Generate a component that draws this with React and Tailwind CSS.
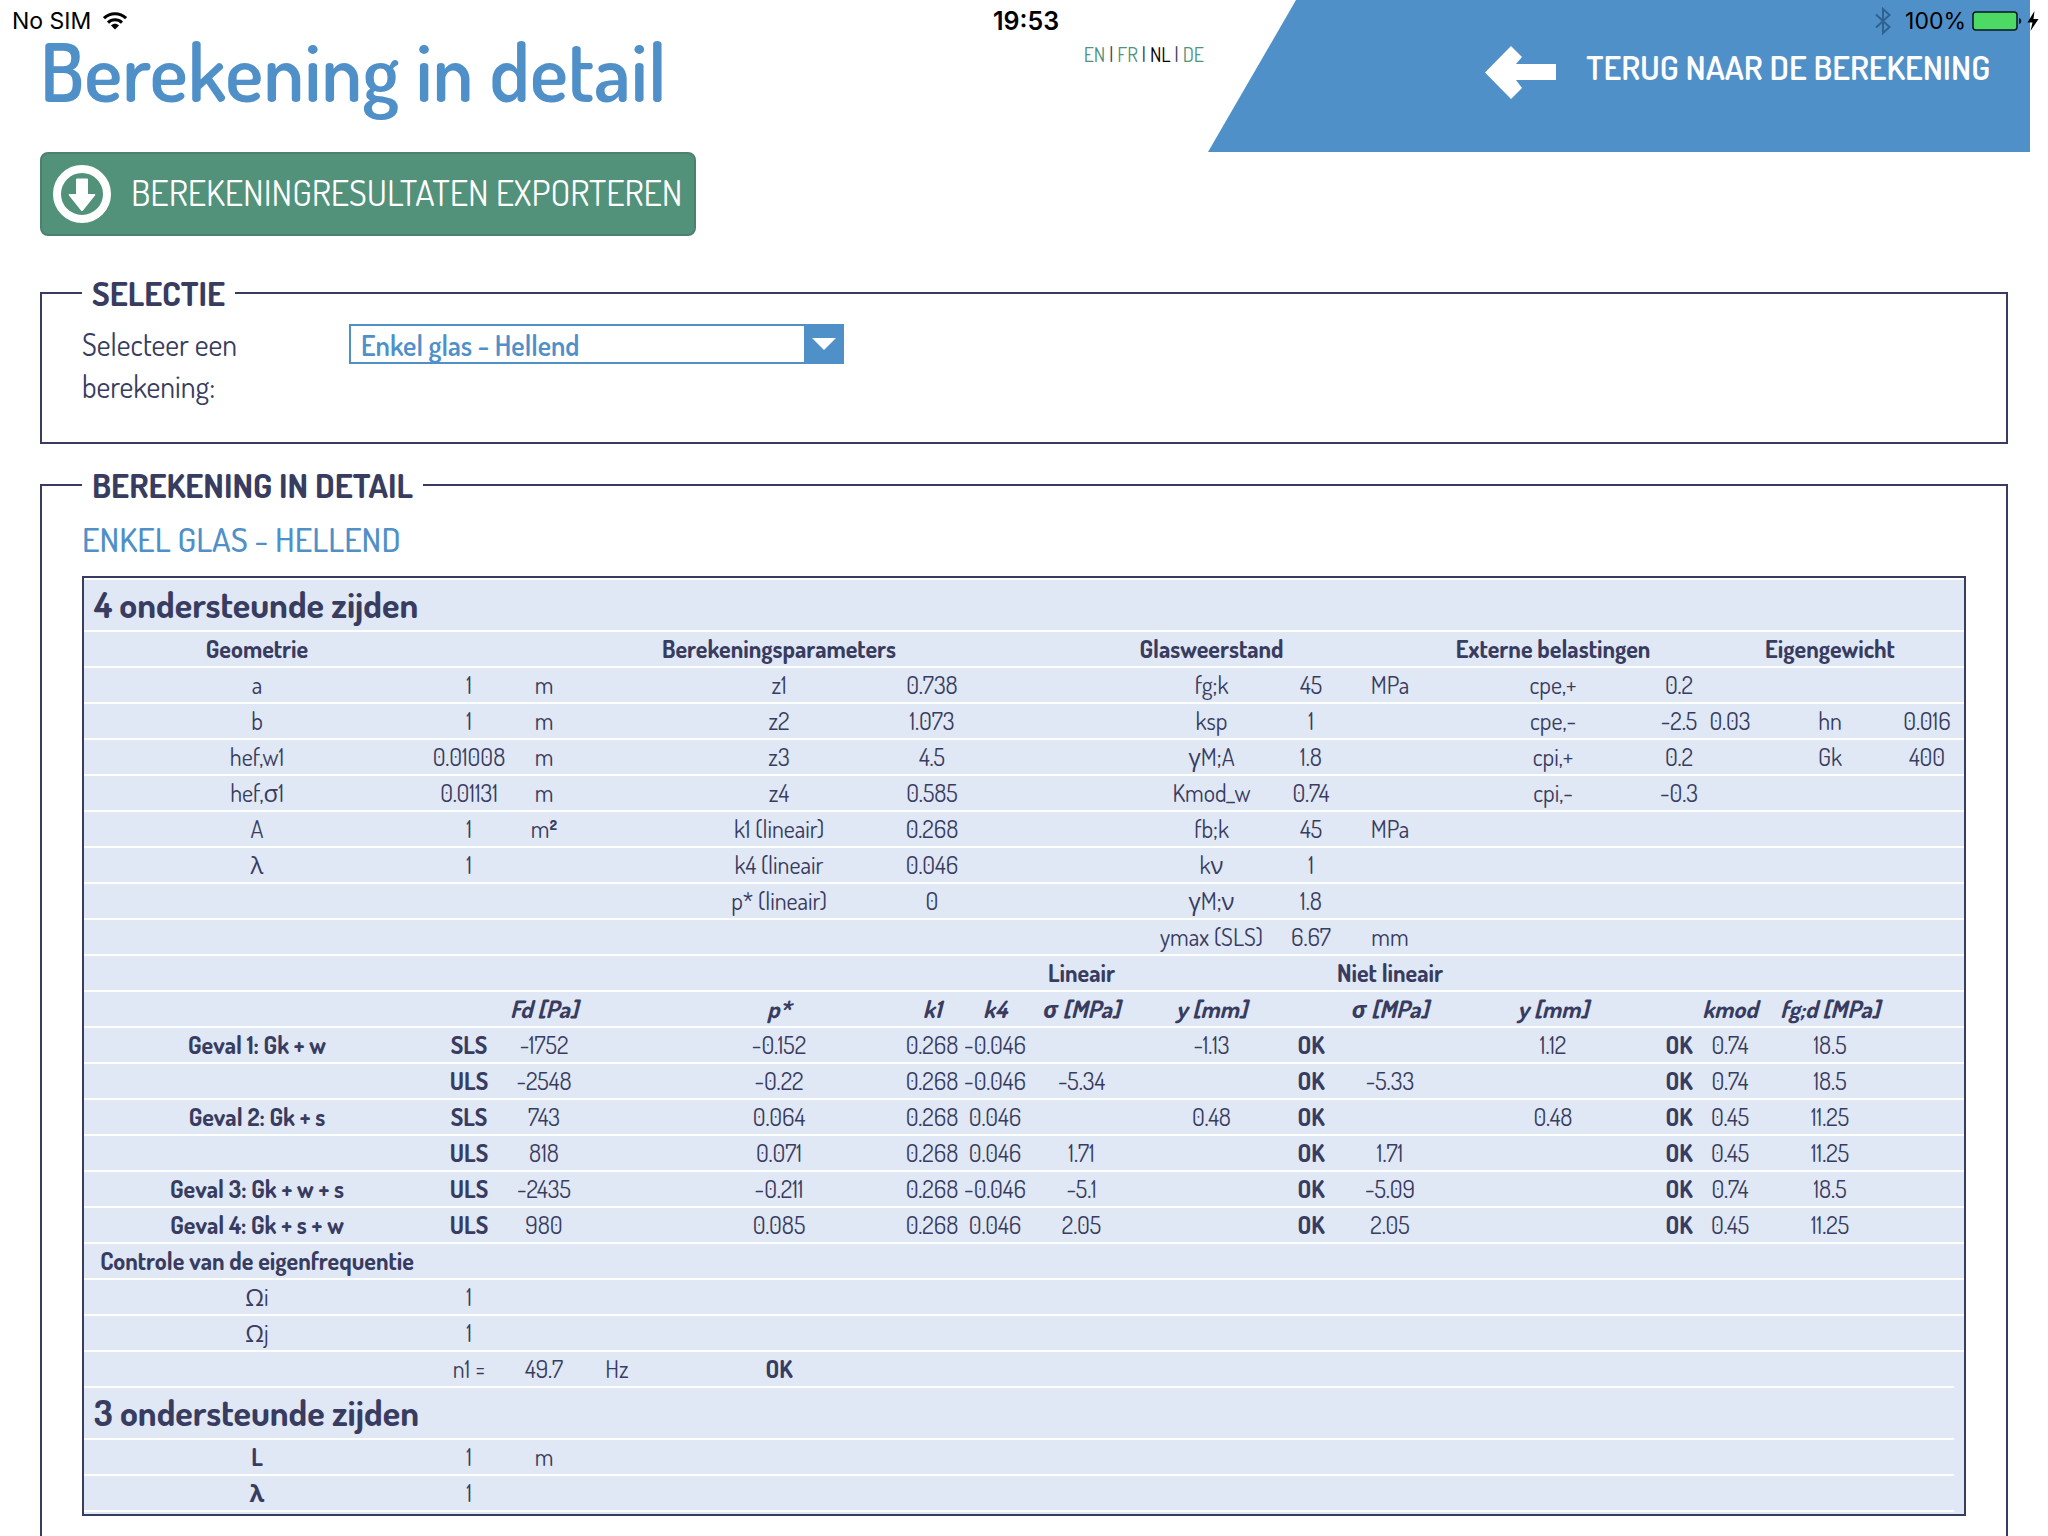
import React from 'react';

const LANGUAGES = ['EN', 'FR', 'NL', 'DE'];

const COLUMNS = [
    'w-[346px]', 'w-[78px]', 'w-[72px]', 'w-[74px]', 'w-[250px]', 'w-[56px]',
    'w-[70px]', 'w-[103px]', 'w-[157px]', 'w-[42px]', 'w-[116px]', 'w-[210px]',
    'w-[42px]', 'w-[60px]', 'w-[140px]', 'w-[54px]', 'w-[10px]',
];

const OK = <b>OK</b>;
const SLS = <b>SLS</b>;
const ULS = <b>ULS</b>;

// Cells are keyed by column index, columns left out stay empty.
// span is the number of columns when a row does not fill the table.
const ROWS = [
    { title: '4 ondersteunde zijden' },
    { head: true, cells: { 0: 'Geometrie', 4: 'Berekeningsparameters', 8: 'Glasweerstand', 11: 'Externe belastingen', 14: 'Eigengewicht' } },
    { cells: { 0: 'a', 1: '1', 2: 'm', 4: 'z1', 5: '0.738', 8: 'fg;k', 9: '45', 10: 'MPa', 11: 'cpe,+', 12: '0.2' } },
    { cells: { 0: 'b', 1: '1', 2: 'm', 4: 'z2', 5: '1.073', 8: 'ksp', 9: '1', 11: 'cpe,-', 12: '-2.5', 13: '0.03', 14: 'hn', 15: '0.016' } },
    { cells: { 0: 'hef,w1', 1: '0.01008', 2: 'm', 4: 'z3', 5: '4.5', 8: 'γM;A', 9: '1.8', 11: 'cpi,+', 12: '0.2', 14: 'Gk', 15: '400' } },
    { cells: { 0: 'hef,σ1', 1: '0.01131', 2: 'm', 4: 'z4', 5: '0.585', 8: 'Kmod_w', 9: '0.74', 11: 'cpi,-', 12: '-0.3' } },
    { cells: { 0: 'A', 1: '1', 2: <>m<b>²</b></>, 4: 'k1 (lineair)', 5: '0.268', 8: 'fb;k', 9: '45', 10: 'MPa' } },
    { cells: { 0: 'λ', 1: '1', 4: 'k4 (lineair', 5: '0.046', 8: 'kν', 9: '1' } },
    { cells: { 4: 'p* (lineair)', 5: '0', 8: 'γM;ν', 9: '1.8' } },
    { cells: { 8: 'ymax (SLS)', 9: '6.67', 10: 'mm' } },
    { head: true, cells: { 7: 'Lineair', 10: 'Niet lineair' } },
    { head: true, italic: true, cells: { 2: 'Fd [Pa]', 4: 'p*', 5: 'k1', 6: 'k4', 7: 'σ [MPa]', 8: 'y [mm]', 10: 'σ [MPa]', 11: 'y [mm]', 13: 'kmod', 14: 'fg;d [MPa]' } },
    { cells: { 0: <b>Geval 1: Gk + w</b>, 1: SLS, 2: '-1752', 4: '-0.152', 5: '0.268', 6: '-0.046', 8: '-1.13', 9: OK, 11: '1.12', 12: OK, 13: '0.74', 14: '18.5' } },
    { cells: { 1: ULS, 2: '-2548', 4: '-0.22', 5: '0.268', 6: '-0.046', 7: '-5.34', 9: OK, 10: '-5.33', 12: OK, 13: '0.74', 14: '18.5' } },
    { cells: { 0: <b>Geval 2: Gk + s</b>, 1: SLS, 2: '743', 4: '0.064', 5: '0.268', 6: '0.046', 8: '0.48', 9: OK, 11: '0.48', 12: OK, 13: '0.45', 14: '11.25' } },
    { cells: { 1: ULS, 2: '818', 4: '0.071', 5: '0.268', 6: '0.046', 7: '1.71', 9: OK, 10: '1.71', 12: OK, 13: '0.45', 14: '11.25' } },
    { cells: { 0: <b>Geval 3: Gk + w + s</b>, 1: ULS, 2: '-2435', 4: '-0.211', 5: '0.268', 6: '-0.046', 7: '-5.1', 9: OK, 10: '-5.09', 12: OK, 13: '0.74', 14: '18.5' } },
    { cells: { 0: <b>Geval 4: Gk + s + w</b>, 1: ULS, 2: '980', 4: '0.085', 5: '0.268', 6: '0.046', 7: '2.05', 9: OK, 10: '2.05', 12: OK, 13: '0.45', 14: '11.25' } },
    { head: true, cells: { 0: 'Controle van de eigenfrequentie' } },
    { cells: { 0: 'Ωi', 1: '1' } },
    { cells: { 0: 'Ωj', 1: '1' } },
    { span: 16, cells: { 1: 'n1 =', 2: '49.7', 3: 'Hz', 4: OK } },
    { span: 16, title: '3 ondersteunde zijden' },
    { span: 16, cells: { 0: <b>L</b>, 1: '1', 2: 'm' } },
    { span: 16, cells: { 0: <b>λ</b>, 1: '1' } },
];

function StatusBar() {
    return (
        <div className="absolute inset-x-0 top-0 h-[42px] flex items-center justify-between pl-3 pr-2 font-['Inter','Liberation_Sans',sans-serif] text-[23px] leading-none text-black pointer-events-none">
            <div className="flex flex-1 items-center gap-3">
                <span>No SIM</span>
                <svg viewBox="0 0 24 18" className="w-6 h-[18px]" fill="none" stroke="currentColor" strokeWidth="3">
                    <path d="M1 6.2C7.2 0.2 16.800 0.200 23 6.200" />
                    <path d="M5 10.600C9 6.800 15 6.800 19 10.600" />
                    <path d="M12 17.500L8 13.500C10.200 11.300 13.800 11.300 16 13.500Z" fill="currentColor" stroke="none" />
                </svg>
            </div>
            <span className="text-[25px] font-semibold">19:53</span>
            <div className="flex flex-1 items-center justify-end">
                <svg viewBox="0 0 16 28" className="w-4 h-7 mr-3.5 text-[#2f628f]" fill="none" stroke="currentColor" strokeWidth="2">
                    <path d="M1 7.500L14.500 20L8 26V2L14.500 8L1 20.500" />
                </svg>
                <span>100%</span>
                <svg viewBox="0 0 68 28" className="w-[68px] h-7 ml-1.5">
                    <rect x="1" y="5" width="44" height="18" rx="3" fill="#4cd964" stroke="#0b1420" strokeWidth="1.500" />
                    <path d="M47 11c3 0.500 3 5.500 0 6z" fill="#0b1420" />
                    <path d="M62.500 4L55.500 15.500H60.500L58.500 24L66.500 12H61.500Z" fill="#000" />
                </svg>
            </div>
        </div>
    );
}

function Header() {
    return (
        <header className="flex items-start justify-between pl-10 pr-[18px]">
            <h1 className="flex-1 pt-6 text-[80px] leading-[94px] font-semibold text-[#5090c8]">
                Berekening in detail
            </h1>
            <nav className="flex gap-1 pt-[42px] mr-1 text-[20px] leading-6 text-[#383c60]">
                {LANGUAGES.map((lang, i) => (
                    <React.Fragment key={lang}>
                        {i > 0 && <span>|</span>}
                        <a href={`#${lang.toLowerCase()}`} className={lang === 'NL' ? 'text-black' : 'text-[#52917a]'}>
                            {lang}
                        </a>
                    </React.Fragment>
                ))}
            </nav>
            <a
                href="#berekening"
                className="flex w-[822px] h-[152px] justify-end gap-[30px] pt-[46px] pr-10 bg-[#5090c8] text-white [clip-path:polygon(88px_0,100%_0,100%_100%,0_100%)]"
            >
                <svg viewBox="0 0 71 53" className="w-[71px] h-[53px]" fill="currentColor">
                    <path d="M0 26.500L26 0L37 11L31 18H71V34H31L37 42L26 53Z" />
                </svg>
                <span className="text-[34px] leading-[42px] font-semibold">TERUG NAAR DE BEREKENING</span>
            </a>
        </header>
    );
}

function Panel({ title, className, children }) {
    return (
        <fieldset className={`border-2 border-[#383c60] px-10 ${className}`}>
            <legend className="px-2.5 text-[34px] leading-10 font-bold">{title}</legend>
            {children}
        </fieldset>
    );
}

function Row({ row }) {
    const span = row.span || COLUMNS.length;

    if (row.title) {
        return (
            <tr>
                <th colSpan={span} className="h-[52px] border-b-2 border-white pl-2.5 pb-0.5 text-left text-[36px] leading-[48px] font-bold">
                    {row.title}
                </th>
            </tr>
        );
    }

    const Cell = row.head ? 'th' : 'td';
    return (
        <tr className={row.italic ? 'italic' : ''}>
            {COLUMNS.slice(0, span).map((_, i) => (
                <Cell key={i} className="h-9 border-b-2 border-white text-center leading-[34px] whitespace-nowrap">
                    {row.cells[i]}
                </Cell>
            ))}
        </tr>
    );
}

export default function App() {
    return (
        <div className="relative bg-white text-[#383c60] font-['Dosis','Open_Sans',sans-serif]">
            <Header />
            <StatusBar />

            <main className="px-10">
                <button
                    type="button"
                    className="flex items-center gap-5 h-[84px] pl-[11px] pr-3 rounded-lg border-2 border-[#4a826e] bg-[#52917a] text-white text-[36px]"
                >
                    <svg viewBox="0 0 58 58" className="w-[58px] h-[58px]">
                        <circle cx="29" cy="29" r="25" fill="none" stroke="currentColor" strokeWidth="8" />
                        <path d="M24 13.500h10a1 1 0 0 1 1 1V29h6.500q1.500 0 .5 1.500L30 45.500q-1 1-2 0L16 30.500q-1-1.500 .5-1.500H23V14.500a1 1 0 0 1 1-1Z" fill="currentColor" />
                    </svg>
                    <span className="pb-1">BEREKENINGRESULTATEN EXPORTEREN</span>
                </button>

                <Panel title="SELECTIE" className="mt-[37px] pt-2.5 pb-[35px]">
                    <div className="flex items-start">
                        <label htmlFor="calculation" className="w-[267px] pr-16 text-[30px] leading-[42px]">
                            Selecteer een berekening:
                        </label>
                        <div className="relative w-[495px] pt-px">
                            <select
                                id="calculation"
                                defaultValue="enkel"
                                className="block w-full h-10 appearance-none border-2 border-[#5090c8] bg-white pt-0.5 pl-2.5 pr-10 text-[28px] leading-[34px] font-semibold text-[#5090c8]"
                            >
                                <option value="enkel">Enkel glas - Hellend</option>
                            </select>
                            <span className="absolute bottom-0 right-0 flex w-10 h-10 items-center justify-center bg-[#5090c8] pointer-events-none">
                                <svg viewBox="0 0 24 12" className="w-6 h-3" fill="#fff">
                                    <path d="M0 0H24L12 12Z" />
                                </svg>
                            </span>
                        </div>
                    </div>
                </Panel>

                <Panel title="BEREKENING IN DETAIL" className="mt-[21px] pt-3.5 pb-10">
                    <h2 className="mb-[17px] text-[34px] leading-10 font-medium text-[#5090c8]">ENKEL GLAS - HELLEND</h2>
                    <div className="border-2 border-[#383c60] bg-[#e0e7f5]">
                        <table className="w-full table-fixed border-separate border-spacing-0 border-t-2 border-white mb-0.5 text-[24px]">
                            <colgroup>
                                {COLUMNS.map((width, i) => <col key={i} className={width} />)}
                            </colgroup>
                            <tbody>
                                {ROWS.map((row, i) => <Row key={i} row={row} />)}
                            </tbody>
                        </table>
                    </div>
                </Panel>
            </main>
        </div>
    );
}
